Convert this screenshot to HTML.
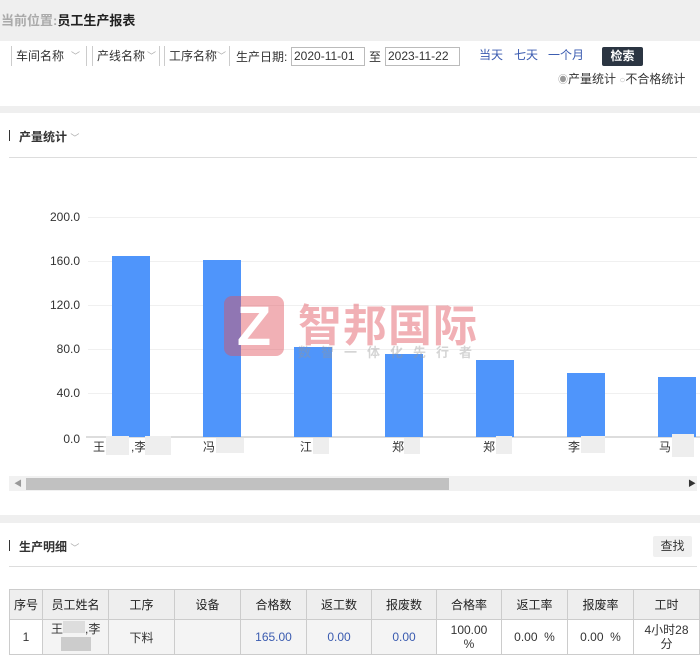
<!DOCTYPE html>
<html><head><meta charset="utf-8"><style>
*{margin:0;padding:0;box-sizing:border-box}
body{width:700px;height:654px;overflow:hidden;background:#fff;font-family:"Liberation Sans","Noto Sans CJK SC",sans-serif;font-size:12px;color:#333;position:relative}
.a{position:absolute}
.sel{position:absolute;top:46px;height:20px;border:1px solid #ccc;border-top:none;border-bottom:none;font-size:12px;line-height:20px;padding-left:4px;color:#333}
.sel i{position:absolute;right:3px;top:0;color:#aaa;font-style:normal;font-size:9px}
.inp{position:absolute;top:47px;height:19px;border:1px solid #bbb;font-size:12px;line-height:17px;padding-left:2px;overflow:hidden;white-space:nowrap}
.bar{position:absolute;background:#4f95fb;width:38px}
.yl{position:absolute;left:40px;width:40px;text-align:right;font-size:12px;color:#333}
.gl{position:absolute;left:88px;right:0;height:1px;background:#f0f0f0}
.xl{position:absolute;top:438px;font-size:12px}
.blur{position:absolute;background:#eee}
table{position:absolute;left:9px;top:589px;border-collapse:collapse;font-size:12px}
td{border:1px solid #ccc;text-align:center;color:#333}
tr.h td{background:#eee;height:30px;font-weight:bold;font-weight:normal;color:#222}
tr.r td{height:33px;background:#fff}
.blue{color:#3a5bb0}
</style></head><body>
<div class="a" style="left:0;top:0;width:700px;height:41px;background:#efefef"></div>
<div class="a" style="left:1px;top:10px;font-size:13px;font-weight:bold;color:#aaa">当前位置:<span style="color:#222">员工生产报表</span></div>

<div class="sel" style="left:11px;width:76px">车间名称<i style="right:6px">﹀</i></div>
<div class="sel" style="left:92px;width:68px">产线名称<i>﹀</i></div>
<div class="sel" style="left:164px;width:66px">工序名称<i>﹀</i></div>
<div class="a" style="left:236px;top:48px;font-size:12px">生产日期:</div>
<div class="inp" style="left:291px;width:74px">2020-11-01</div>
<div class="a" style="left:369px;top:48px">至</div>
<div class="inp" style="left:385px;width:75px">2023-11-22</div>
<div class="a" style="left:479px;top:46px;color:#3a5bb0">当天</div>
<div class="a" style="left:514px;top:46px;color:#3a5bb0">七天</div>
<div class="a" style="left:548px;top:46px;color:#3a5bb0">一个月</div>
<div class="a" style="left:602px;top:47px;width:41px;height:19px;background:#2b3542;color:#fff;border-radius:2px;text-align:center;line-height:19px;font-weight:bold">检索</div>
<div class="a" style="left:558px;top:70px;font-size:12px"><span style="color:#999;font-size:10px">◉</span>产量统计 <span style="color:#bbb;font-size:10px">○</span>不合格统计</div>

<div class="a" style="left:0;top:106px;width:700px;height:7px;background:#efefef"></div>
<div class="a" style="left:9px;top:130px;width:1px;height:11px;background:#333"></div>
<div class="a" style="left:19px;top:128px;font-weight:bold;font-size:12px">产量统计 <span style="color:#aaa;font-weight:normal;font-size:9px">﹀</span></div>
<div class="a" style="left:9px;top:157px;width:688px;height:1px;background:#ddd"></div>

<div class="gl" style="top:217px"></div><div class="gl" style="top:261px"></div><div class="gl" style="top:305px"></div><div class="gl" style="top:349px"></div><div class="gl" style="top:393px"></div>
<div class="a" style="left:86px;top:436px;right:0;height:2px;background:#ddd"></div>
<div class="yl" style="top:210px">200.0</div><div class="yl" style="top:254px">160.0</div><div class="yl" style="top:298px">120.0</div><div class="yl" style="top:342px">80.0</div><div class="yl" style="top:386px">40.0</div><div class="yl" style="top:432px">0.0</div>

<div class="bar" style="left:112px;top:256px;height:181px"></div>
<div class="bar" style="left:203px;top:260px;height:177px"></div>
<div class="bar" style="left:294px;top:347px;height:90px"></div>
<div class="bar" style="left:385px;top:354px;height:83px"></div>
<div class="bar" style="left:476px;top:360px;height:77px"></div>
<div class="bar" style="left:567px;top:373px;height:64px"></div>
<div class="bar" style="left:658px;top:377px;height:60px"></div>

<div class="a" style="left:224px;top:296px;width:60px;height:60px;background:rgba(225,80,90,0.45);border-radius:8px;color:#fff;font-size:56px;font-weight:bold;text-align:center;line-height:60px">Z</div>
<div class="a" style="left:298px;top:290px;font-size:44px;font-weight:bold;color:rgba(225,80,90,0.45);letter-spacing:1px">智邦国际</div>
<div class="a" style="left:298px;top:342px;font-size:13px;font-weight:bold;color:rgba(150,150,150,0.4);letter-spacing:10px">数智一体化先行者</div>

<div class="xl" style="left:93px">王</div><div class="blur" style="left:106px;top:436px;width:23px;height:19px"></div><div class="xl" style="left:131px">,李</div><div class="blur" style="left:145px;top:436px;width:26px;height:19px"></div>
<div class="xl" style="left:203px">冯</div><div class="blur" style="left:216px;top:438px;width:28px;height:15px"></div>
<div class="xl" style="left:300px">江</div><div class="blur" style="left:313px;top:438px;width:16px;height:16px"></div>
<div class="xl" style="left:392px">郑</div><div class="blur" style="left:404px;top:438px;width:16px;height:16px"></div>
<div class="xl" style="left:483px">郑</div><div class="blur" style="left:496px;top:436px;width:16px;height:18px"></div>
<div class="xl" style="left:568px">李</div><div class="blur" style="left:581px;top:436px;width:24px;height:17px"></div>
<div class="xl" style="left:659px">马</div><div class="blur" style="left:672px;top:434px;width:22px;height:23px"></div>

<div class="a" style="left:9px;top:476px;width:688px;height:15px;background:#f1f1f1"></div>
<div class="a" style="left:26px;top:478px;width:423px;height:12px;background:#c1c1c1"></div>
<div class="a" style="left:14px;top:478px;font-size:8px;color:#999">◀</div>
<div class="a" style="left:688px;top:478px;font-size:8px;color:#333">▶</div>

<div class="a" style="left:0;top:515px;width:700px;height:8px;background:#efefef"></div>
<div class="a" style="left:9px;top:540px;width:1px;height:11px;background:#333"></div>
<div class="a" style="left:19px;top:538px;font-weight:bold;font-size:12px">生产明细 <span style="color:#aaa;font-weight:normal;font-size:9px">﹀</span></div>
<div class="a" style="left:653px;top:536px;width:39px;height:21px;background:#f0f0f0;border-radius:2px;text-align:center;line-height:21px">查找</div>
<div class="a" style="left:9px;top:566px;width:688px;height:1px;background:#ddd"></div>

<table>
<tr class="h"><td style="width:33px">序号</td><td style="width:66px">员工姓名</td><td style="width:66px">工序</td><td style="width:66px">设备</td><td style="width:66px">合格数</td><td style="width:65px">返工数</td><td style="width:65px">报废数</td><td style="width:65px">合格率</td><td style="width:66px">返工率</td><td style="width:66px">报废率</td><td style="width:66px">工时</td></tr>
<tr class="r"><td>1</td><td style="position:relative;background:#f4f4f4;text-align:left;padding-left:8px;vertical-align:top">王<span style="display:inline-block;width:22px;height:12px;background:#ddd"></span>,李<br><span style="display:inline-block;margin-left:10px;width:30px;height:14px;background:#ccc"></span></td><td style="background:#f4f4f4">下料</td><td style="background:#f4f4f4"></td><td class="blue" style="background:#f4f4f4">165.00</td><td class="blue" style="background:#f4f4f4">0.00</td><td class="blue" style="background:#f4f4f4">0.00</td><td style="line-height:14px">100.00<br>%</td><td>0.00 &nbsp;%</td><td>0.00 &nbsp;%</td><td style="line-height:14px">4小时28<br>分</td></tr>
</table>
</body></html>
